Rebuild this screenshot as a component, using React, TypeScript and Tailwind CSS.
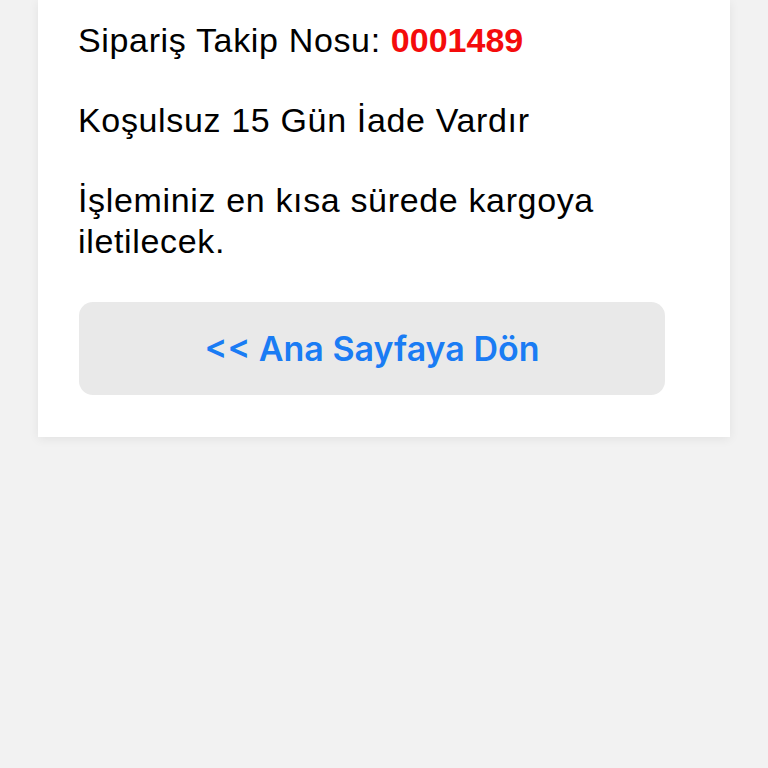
import React from "react";

export default function App() {
  return (
    <div className="min-h-[768px] w-full bg-[#f2f2f2]">
      <div className="mx-[38px] bg-white pl-[40px] pr-[40px] pt-[20px] pb-[42px] shadow-[0_2px_10px_rgba(0,0,0,0.07)]">
        <div className="text-[34px] leading-[41px] tracking-[0.65px] text-black font-['Liberation_Sans',Arial,sans-serif]">
          <p>
            Sipariş Takip Nosu: <span className="font-bold tracking-normal text-[#f40c0c]">0001489</span>
          </p>
          <p className="mt-[39px]">Koşulsuz 15 Gün İade Vardır</p>
          <p className="mt-[39px]">İşleminiz en kısa sürede kargoya iletilecek.</p>
        </div>
        <button className="ml-px mt-[40px] flex h-[93px] w-[586px] items-center justify-center rounded-[14px] bg-[#e9e9e9] text-[34px] font-semibold text-[#1a7cf4] font-['Inter',sans-serif]">
          &lt;&lt; Ana Sayfaya Dön
        </button>
      </div>
    </div>
  );
}
